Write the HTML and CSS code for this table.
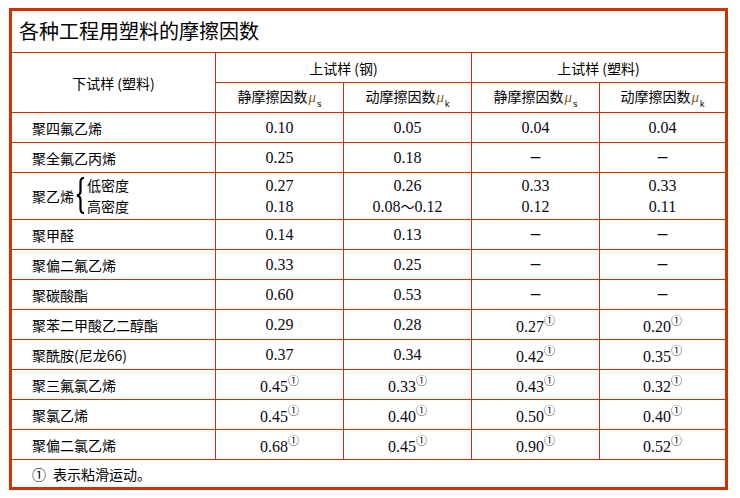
FILE: index.html
```html
<!DOCTYPE html>
<html lang="zh">
<head>
<meta charset="utf-8">
<title>各种工程用塑料的摩擦因数</title>
<link rel="stylesheet" href="styles.css">
</head>
<body>
<div class="frame">
  <div class="title">各种工程用塑料的摩擦因数</div>
  <div class="grid">
    <div class="c hd span-r2"><span>下试样 (塑料)</span></div>
    <div class="c hd span-c2"><span>上试样 (钢)</span></div>
    <div class="c hd span-c2 last"><span>上试样 (塑料)</span></div>
    <div class="c hd"><span>静摩擦因数<i class="mu">μ</i><sub class="sb">s</sub></span></div>
    <div class="c hd"><span>动摩擦因数<i class="mu">μ</i><sub class="sb">k</sub></span></div>
    <div class="c hd"><span>静摩擦因数<i class="mu">μ</i><sub class="sb">s</sub></span></div>
    <div class="c hd last"><span>动摩擦因数<i class="mu">μ</i><sub class="sb">k</sub></span></div>

    <div class="c lab">聚四氟乙烯</div>
    <div class="c n">0.10</div><div class="c n">0.05</div><div class="c n">0.04</div><div class="c n last">0.04</div>

    <div class="c lab">聚全氟乙丙烯</div>
    <div class="c n">0.25</div><div class="c n">0.18</div><div class="c n"><span class="dash">—</span></div><div class="c n last"><span class="dash">—</span></div>

    <div class="c lab pe">
      <span>聚乙烯</span>
      <svg class="brace" width="9" height="37" viewBox="0 0 9 37"><path d="M8 1 C5 1 4.5 2.5 4.5 5.5 L4.5 14.5 C4.5 17 3.5 18 1 18.5 C3.5 19 4.5 20 4.5 22.5 L4.5 31.5 C4.5 34.5 5 36 8 36" fill="none" stroke="#000" stroke-width="2.2"/></svg>
      <span class="stack"><span>低密度</span><span>高密度</span></span>
    </div>
    <div class="c n"><span class="stack"><span>0.27</span><span>0.18</span></span></div>
    <div class="c n"><span class="stack"><span>0.26</span><span>0.08<span class="tilde">～</span>0.12</span></span></div>
    <div class="c n"><span class="stack"><span>0.33</span><span>0.12</span></span></div>
    <div class="c n last"><span class="stack"><span>0.33</span><span>0.11</span></span></div>

    <div class="c lab">聚甲醛</div>
    <div class="c n">0.14</div><div class="c n">0.13</div><div class="c n"><span class="dash">—</span></div><div class="c n last"><span class="dash">—</span></div>

    <div class="c lab">聚偏二氟乙烯</div>
    <div class="c n">0.33</div><div class="c n">0.25</div><div class="c n"><span class="dash">—</span></div><div class="c n last"><span class="dash">—</span></div>

    <div class="c lab">聚碳酸酯</div>
    <div class="c n">0.60</div><div class="c n">0.53</div><div class="c n"><span class="dash">—</span></div><div class="c n last"><span class="dash">—</span></div>

    <div class="c lab">聚苯二甲酸乙二醇酯</div>
    <div class="c n">0.29</div><div class="c n">0.28</div><div class="c n"><span>0.27<sup class="fn">①</sup></span></div><div class="c n last"><span>0.20<sup class="fn">①</sup></span></div>

    <div class="c lab">聚酰胺(尼龙66)</div>
    <div class="c n">0.37</div><div class="c n">0.34</div><div class="c n"><span>0.42<sup class="fn">①</sup></span></div><div class="c n last"><span>0.35<sup class="fn">①</sup></span></div>

    <div class="c lab">聚三氟氯乙烯</div>
    <div class="c n"><span>0.45<sup class="fn">①</sup></span></div><div class="c n"><span>0.33<sup class="fn">①</sup></span></div><div class="c n"><span>0.43<sup class="fn">①</sup></span></div><div class="c n last"><span>0.32<sup class="fn">①</sup></span></div>

    <div class="c lab">聚氯乙烯</div>
    <div class="c n"><span>0.45<sup class="fn">①</sup></span></div><div class="c n"><span>0.40<sup class="fn">①</sup></span></div><div class="c n"><span>0.50<sup class="fn">①</sup></span></div><div class="c n last"><span>0.40<sup class="fn">①</sup></span></div>

    <div class="c lab">聚偏二氯乙烯</div>
    <div class="c n"><span>0.68<sup class="fn">①</sup></span></div><div class="c n"><span>0.45<sup class="fn">①</sup></span></div><div class="c n"><span>0.90<sup class="fn">①</sup></span></div><div class="c n last"><span>0.52<sup class="fn">①</sup></span></div>

    <div class="c lab note"><span class="circ">①</span><span>表示粘滑运动。</span></div>
  </div>
</div>
</body>
</html>
```
FILE: styles.css
```css
html, body {
  margin: 0;
  padding: 0;
  background: #ffffff;
}

body {
  font-family: "Noto Sans CJK SC", sans-serif;
  color: #000000;
}

.frame {
  margin: 8px 0 0 9px;
  width: 719px;
  border: 3px solid #cc3300;
  box-sizing: border-box;
}

.title {
  height: 42px;
  box-sizing: border-box;
  border-bottom: 1px solid #cc3300;
  display: flex;
  align-items: center;
  padding-left: 7px;
  font-size: 20px;
  line-height: 1;
  padding-bottom: 1px;
}

.grid {
  display: grid;
  grid-template-columns: 204px 128px 128px 128px 125px;
  grid-template-rows: 30px 30px 30px 30px 47px repeat(8, 30px) 27px;
}

.c {
  box-sizing: border-box;
  border-right: 1px solid #cc3300;
  border-bottom: 1px solid #cc3300;
  display: flex;
  align-items: center;
  justify-content: center;
  white-space: nowrap;
}

.c.last {
  border-right: none;
}

.span-r2 {
  grid-row: span 2;
}

.span-c2 {
  grid-column: span 2;
}

.hd {
  font-size: 14px;
  line-height: 20px;
}

.mu {
  font-family: "Liberation Serif", serif;
  font-style: italic;
  font-size: 15px;
  color: #8a5e18;
  margin-left: 1px;
}

.sb {
  font-family: "Liberation Sans", sans-serif;
  font-size: 9px;
  vertical-align: -5px;
  line-height: 1;
  margin-left: 1px;
}

.lab {
  justify-content: flex-start;
  padding-left: 20px;
  font-size: 14px;
  line-height: 20px;
}

.n {
  font-family: "Liberation Serif", "Noto Sans CJK SC", serif;
  font-size: 16px;
  line-height: 16px;
  color: #0a0a14;
}

.stack {
  display: flex;
  flex-direction: column;
  align-items: center;
  line-height: 21px;
}

.pe .stack {
  align-items: flex-start;
}

.pe {
  padding-bottom: 1px;
}

.brace {
  display: block;
  margin: 0 2px 0 2px;
}

.tilde {
  font-family: "Noto Sans CJK SC", sans-serif;
  font-size: 14px;
}

.dash {
  font-family: "DejaVu Sans", sans-serif;
  font-size: 11px;
  font-weight: bold;
  line-height: 16px;
}

.fn {
  font-family: "Noto Sans CJK SC", sans-serif;
  font-size: 11px;
  line-height: 1;
  vertical-align: 7px;
}

.note {
  grid-column: span 5;
  border-right: none;
  border-bottom: none;
}

.circ {
  margin-right: 7px;
}
```
